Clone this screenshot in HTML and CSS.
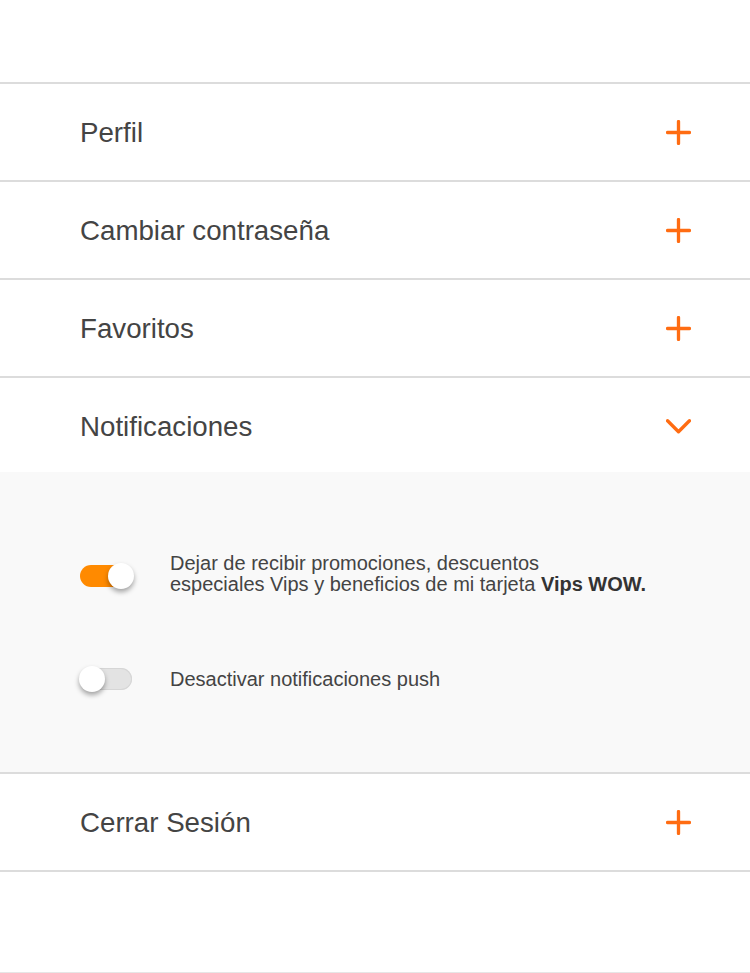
FILE: index.html
```html
<!DOCTYPE html>
<html lang="es">
<head>
<meta charset="utf-8">
<link rel="stylesheet" href="styles.css">
</head>
<body>
<div class="page">
  <div class="top-space"></div>
  <div class="row">
    <span class="row-title">Perfil</span>
    <svg class="icon" viewBox="0 0 24 24"><path d="M12 1.5V22.5M1.5 12H22.5"/></svg>
  </div>
  <div class="row">
    <span class="row-title">Cambiar contraseña</span>
    <svg class="icon" viewBox="0 0 24 24"><path d="M12 1.5V22.5M1.5 12H22.5"/></svg>
  </div>
  <div class="row">
    <span class="row-title">Favoritos</span>
    <svg class="icon" viewBox="0 0 24 24"><path d="M12 1.5V22.5M1.5 12H22.5"/></svg>
  </div>
  <div class="row row-open">
    <span class="row-title">Notificaciones</span>
    <svg class="icon" viewBox="0 0 24 24"><path d="M1.5 6.5L12 17L22.5 6.5"/></svg>
  </div>
  <div class="panel">
    <div class="opt">
      <span class="toggle on"><span class="knob"></span></span>
      <p class="opt-text">Dejar de recibir promociones, descuentos<br>especiales Vips y beneficios de mi tarjeta <b>Vips WOW.</b></p>
    </div>
    <div class="opt">
      <span class="toggle"><span class="knob"></span></span>
      <p class="opt-text">Desactivar notificaciones push</p>
    </div>
  </div>
  <div class="row">
    <span class="row-title">Cerrar Sesión</span>
    <svg class="icon" viewBox="0 0 24 24"><path d="M12 1.5V22.5M1.5 12H22.5"/></svg>
  </div>
  <div class="bottom-space"></div>
</div>
</body>
</html>
```
FILE: styles.css
```css
html, body {
  margin: 0;
  padding: 0;
  background: #fff;
}
body {
  font-family: "Liberation Sans", Arial, sans-serif;
  color: #444;
}
.page {
  width: 750px;
}
.top-space {
  height: 82px;
  border-bottom: 2px solid #dcdcdc;
}
.row {
  height: 96px;
  border-bottom: 2px solid #dcdcdc;
  display: flex;
  align-items: center;
  justify-content: space-between;
  padding: 0 59px 0 80px;
}
.row-open {
  height: 94px;
  border-bottom: none;
}
.row-title {
  font-size: 27.7px;
  color: #444;
  padding-top: 2px;
}
.row-open .row-title {
  padding-top: 4px;
}
.icon {
  width: 25px;
  height: 25px;
  fill: none;
  stroke: #ff6c12;
  stroke-width: 3.2;
  stroke-linecap: round;
  stroke-linejoin: round;
}
.row-open .icon {
  margin-top: 3px;
}
.panel {
  background: #f9f9f9;
  height: 302px;
  border-bottom: 2px solid #dcdcdc;
  box-sizing: border-box;
  padding-top: 81px;
  display: flex;
  flex-direction: column;
  gap: 73px;
}
.opt {
  display: flex;
  align-items: center;
  padding-left: 80px;
}
.toggle {
  position: relative;
  width: 52px;
  height: 22px;
  border-radius: 11px;
  background: #e3e3e3;
  box-shadow: inset 0 0 0 1px #d6d6d6;
  flex: none;
  margin-right: 38px;
}
.toggle.on {
  background: #ff8a00;
  box-shadow: none;
  margin-top: 4px;
}
.knob {
  position: absolute;
  top: -2px;
  left: -1px;
  width: 26px;
  height: 26px;
  border-radius: 50%;
  background: #fff;
  box-shadow: 0 3px 5px rgba(0,0,0,0.35);
}
.toggle.on .knob {
  left: 28px;
}
.opt-text {
  margin: 0;
  font-size: 20px;
  line-height: 21px;
  color: #444;
}
.opt-text b {
  font-weight: bold;
  color: #333;
}
.bottom-space {
  height: 100px;
  border-bottom: 1px solid #e6e6e6;
}
```
